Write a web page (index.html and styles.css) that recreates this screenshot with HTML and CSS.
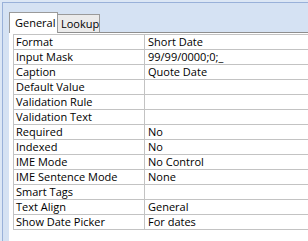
FILE: index.html
```html
<!DOCTYPE html>
<html lang="en">
<head>
  <meta charset="UTF-8">
  <meta name="viewport" content="width=device-width, initial-scale=1.0">
  <title>Field Properties</title>
  <link rel="stylesheet" href="styles.css">
</head>
<body>
  <div class="frame">
    <div class="tabs">
      <div class="tab active">General</div>
      <div class="tab">Lookup</div>
    </div>
    <div class="page">
      <table class="props">
        <tr><td class="name">Format</td><td class="value">Short Date</td></tr>
        <tr><td class="name">Input Mask</td><td class="value">99/99/0000;0;_</td></tr>
        <tr><td class="name">Caption</td><td class="value">Quote Date</td></tr>
        <tr><td class="name">Default Value</td><td class="value"></td></tr>
        <tr><td class="name">Validation Rule</td><td class="value"></td></tr>
        <tr><td class="name">Validation Text</td><td class="value"></td></tr>
        <tr><td class="name">Required</td><td class="value">No</td></tr>
        <tr><td class="name">Indexed</td><td class="value">No</td></tr>
        <tr><td class="name">IME Mode</td><td class="value">No Control</td></tr>
        <tr><td class="name">IME Sentence Mode</td><td class="value">None</td></tr>
        <tr><td class="name">Smart Tags</td><td class="value"></td></tr>
        <tr><td class="name">Text Align</td><td class="value">General</td></tr>
        <tr><td class="name">Show Date Picker</td><td class="value">For dates</td></tr>
      </table>
    </div>
  </div>
</body>
</html>
```

FILE: styles.css
```css
html, body {
  margin: 0;
  height: 100%;
  overflow: hidden;
}
body {
  display: flex;
  flex-direction: column;
  background-color: #dce7f5;
  font-family: 'Open Sans', sans-serif;
  font-size: 11px;
  color: #000;
}
.frame {
  flex: 1;
  display: flex;
  flex-direction: column;
  margin: 2px 0 0 2px;
  border-top: 1px solid #99b1d9;
  border-left: 1px solid #99b1d9;
  background-color: #d5e2f3;
  padding: 9px 0 0 6px;
}
.tabs {
  display: flex;
  align-items: flex-end;
  height: 20px;
  position: relative;
  z-index: 1;
}
.tab {
  height: 18px;
  line-height: 17px;
  padding: 0 3px;
  background-color: #ebebeb;
  border: 1px solid #9a9a9a;
  border-bottom: none;
  box-sizing: border-box;
}
.tab.active {
  height: 21px;
  width: 49px;
  padding-left: 5px;
  line-height: 19px;
  background-color: #fff;
  margin-bottom: -1px;
}
.tab + .tab {
  border-left: none;
  width: 42px;
}
.page {
  flex: 1;
  background-color: #fff;
  border-top: 1px solid #8e8e8e;
  padding: 1px 0 0 4px;
}
.props {
  border-collapse: collapse;
  width: 100%;
}
.props td {
  height: 14px;
  padding: 0;
  line-height: 14px;
  border: 1px solid #c3c3c3;
  border-right: none;
  white-space: nowrap;
}
.props .name {
  width: 128px;
  padding-left: 2px;
}
.props .value {
  padding-left: 3px;
}
```
